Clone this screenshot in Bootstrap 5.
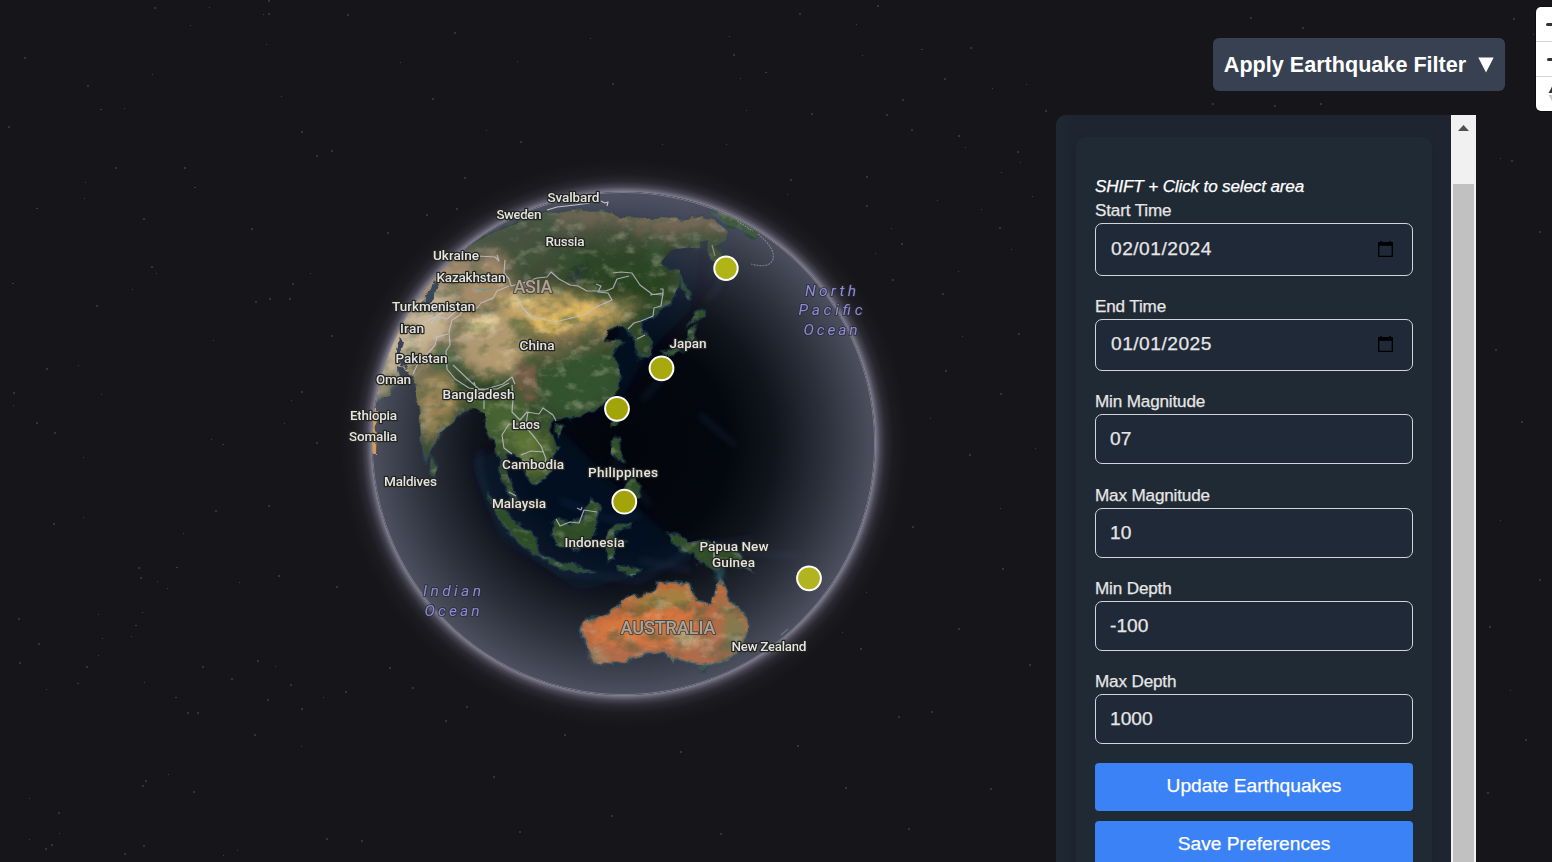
<!DOCTYPE html>
<html lang="en">
<head>
<meta charset="utf-8">
<meta name="viewport" content="width=device-width, initial-scale=1">
<title>Earthquake Globe</title>
<link href="https://cdn.jsdelivr.net/npm/bootstrap@5.3.0/dist/css/bootstrap.min.css" rel="stylesheet">
<style>
  body { background: #16151a; font-family: "Liberation Sans", Arial, sans-serif; color: #e6e6e6; }
  .world { z-index: 0; }
  .overlay { z-index: 1; }
  .side { width: 449px; padding-top: 38px; margin-right: 31px; }
  .filter-btn { width: 292px; height: 53px; background: #384151; color: #fff; font-weight: 700; font-size: 21.6px; border: 0; border-radius: 6px; line-height: 1; white-space: nowrap; gap: 12px; }
  .filter-btn:hover { background: #384151; color: #fff; }
  .filter-btn span { padding-top: 1px; }
  .panel { width: 420px; margin-top: 24px; background: #1e2530; border-radius: 10px 0 0 0; overflow: hidden; }
  .panel-body { padding: 22px 19px 0 20px; background: linear-gradient(90deg, #1e2833, #1e2430 20px, #1e2430); }
  .inner { background: #202a34; border-radius: 10px 10px 0 0; padding: 38px 19px 0; box-shadow: 0 4px 6px rgba(0,0,0,.06); }
  .hint, .inner label { font-size: 17.1px; line-height: 24px; height: 24px; margin: 0; display: block; -webkit-text-stroke: .25px currentColor; letter-spacing: -.15px; }
  .hint { color: #fff; }
  .field { margin-bottom: 19px; position: relative; }
  .inner .form-control { height: 50px; border: 1px solid #d1d5db; border-radius: 7px; background: #202937; color: #e6e6e6; font-size: 19.2px; padding: 0 14px 1px; -webkit-text-stroke: .25px currentColor; }
  .inner .form-control.date { letter-spacing: .48px; padding: 0 15px 2px; }
  .cal { position: absolute; right: 19px; bottom: 18px; }
  .act { height: 48px; background: #3b82f6; color: #fff; border: 0; border-radius: 4px; font-size: 19.2px; margin-bottom: 10px; padding: 0 0 2px; line-height: 1; -webkit-text-stroke: .25px currentColor; }
  .bar { width: 25px; background: #f1f1f1; padding: 0 2px; }
  .bar-arrow { height: 69px; padding-top: 10px; }
  .thumb { background: #c1c1c1; }
  .ctrl { width: 16px; margin-top: 7px; }
  .ctrl-in { width: 34px; height: 104px; background: #fff; border-radius: 5px; box-shadow: 0 0 0 1px rgba(0,0,0,.35); }
  .ctrl-in div + div { border-top: 1px solid #d4d4d4; }
  .lbl text { font-family: Roboto, "Open Sans", sans-serif; font-size: 13.6px; font-weight: 500; fill: #e4e4e4; stroke: #25251f; stroke-width: 2.6px; stroke-linejoin: round; paint-order: stroke; text-anchor: middle; }
  .lbl .continent { font-size: 18px; fill: #aaa397; stroke: #57483c; stroke-width: 2px; }
  .lbl .sea { font-size: 15.5px; font-style: italic; font-weight: 400; fill: #8d8ad6; stroke: #272936; stroke-width: 2px; stroke-opacity: .7; }
</style>
</head>
<body class="vh-100 overflow-hidden position-relative">

<svg class="world position-absolute top-0 start-0" width="1552" height="862" viewBox="0 0 1552 862">
  <defs>
    <clipPath id="disc"><circle cx="623.5" cy="443.5" r="251.5"/></clipPath>
    <radialGradient id="glow" gradientUnits="userSpaceOnUse" cx="623.5" cy="443.5" r="284">
      <stop offset=".884" stop-color="#8b899b"/><stop offset=".893" stop-color="#6a6878"/><stop offset=".905" stop-color="#45434f"/>
      <stop offset=".923" stop-color="#2a2931"/><stop offset=".95" stop-color="#1c1b20"/><stop offset="1" stop-color="#16151a"/>
    </radialGradient>
    <radialGradient id="haze" gradientUnits="userSpaceOnUse" cx="623.5" cy="443.5" r="252">
      <stop offset="0" stop-color="#565a6a" stop-opacity="0"/><stop offset=".42" stop-color="#565a6a" stop-opacity=".02"/>
      <stop offset=".6" stop-color="#565a6a" stop-opacity=".17"/><stop offset=".8" stop-color="#565a6a" stop-opacity=".5"/>
      <stop offset=".93" stop-color="#565a6a" stop-opacity=".75"/><stop offset="1" stop-color="#5b5d6c" stop-opacity=".85"/>
    </radialGradient>
    <radialGradient id="hazeland" gradientUnits="userSpaceOnUse" cx="623.5" cy="443.5" r="252">
      <stop offset=".6" stop-color="#77798a" stop-opacity="0"/><stop offset="1" stop-color="#77798a" stop-opacity=".28"/>
    </radialGradient>
    <filter id="coast" x="-5%" y="-5%" width="110%" height="110%">
      <feTurbulence type="fractalNoise" baseFrequency=".09" numOctaves="3" seed="4" result="n"/>
      <feDisplacementMap in="SourceGraphic" in2="n" scale="9" xChannelSelector="R" yChannelSelector="G"/>
      <feGaussianBlur stdDeviation=".5"/>
    </filter>
    <filter id="soft" x="-50%" y="-50%" width="200%" height="200%"><feGaussianBlur stdDeviation="7"/></filter>
    <filter id="soft4" x="-50%" y="-50%" width="200%" height="200%"><feGaussianBlur stdDeviation="3"/></filter>
    <filter id="grain" x="0" y="0" width="100%" height="100%">
      <feTurbulence type="fractalNoise" baseFrequency=".045 .06" numOctaves="5" seed="11"/>
      <feColorMatrix values="0 0 0 0 .04  0 0 0 0 .09  0 0 0 0 .03  3.2 0 0 0 -1.5"/>
    </filter>
    <filter id="light" x="0" y="0" width="100%" height="100%">
      <feTurbulence type="fractalNoise" baseFrequency=".06 .09" numOctaves="4" seed="29"/>
      <feColorMatrix values="0 0 0 0 .86  0 0 0 0 .78  0 0 0 0 .6  0 3 0 0 -1.6"/>
    </filter>
    <path id="asia" d="M372 408L375 404 390 393 402 381 397 366 409 370 415 383 420 413 421 443 425 462 431 450 440 433 463 413 474 406 485 413 488 437 495 440 499 460 502 483 512 503 521 508 517 496 510 483 505 463 507 452 522 460 527 477 537 485 553 471 554 452 560 448 548 432 552 420 567 418 593 410 612 396 621 378 619 367 611 353 623 342 604 339 607 330 622 325 629 330 637 343 638 357 649 355 650 343 643 331 640 322 657 313 670 303 678 287 680 270 668 270 660 263 670 250 684 248 700 248 700 242 708 240 707 250 711 260 721 264 722 254 714 247 726 240 728 231 717 222 700 218 687 220 663 217 653 220 637 217 620 218 603 210 590 212 573 210 560 213 545 212 520 222 488 235 430 270 375 350 365 410Z"/>
    <path id="oz" d="M580 628L586 621 602 615 620 605 624 599 632 595 640 597 650 594 658 588 659 583 674 582 690 584 691 593 697 601 711 605 716 587 720 578 728 592 731 602 743 612 748 621 748 633 740 648 728 661 706 666 694 664 680 659 673 660 664 653 653 653 638 656 624 661 606 663 592 661 591 652 584 641Z"/>
    <path id="isles" d="M487 493L502 509 520 524 536 537 541 556 534 555 518 543 505 526 492 508ZM539 555L556 561 580 567 594 571 577 571 552 565ZM552 522L558 519 568 523 580 520 586 507 592 500 600 508 596 523 596 533 589 542 576 549 558 546 552 536ZM604 544L608 532 613 526 632 524 630 528 614 531 617 538 626 541 617 545 613 558 608 560ZM612 441L619 438 620 452 626 461 619 462 611 453ZM627 483L634 477 641 486 639 498 630 501 624 493ZM668 533L680 534 686 543 700 540 722 545 739 553 752 571 738 566 724 564 714 570 700 564 696 555 680 550ZM695 313L703 309 703 316 689 324ZM688 330L697 325 695 337 691 343 681 350 668 356 662 353 676 347 687 342ZM680 272L684 283 690 298 687 300 681 287ZM556 424L563 426 560 435 555 431ZM431 457L437 469 434 477 429 470ZM697 667L709 665 703 671ZM708 210L728 211 745 220 760 233 755 238 740 229 724 224ZM616 566L640 569 632 576 618 571ZM612 418L616 412 617 422 613 425Z"/>
    <clipPath id="asiaclip"><use href="#asia"/></clipPath>
  </defs>

  <!-- star field -->
  <g fill="none" stroke="#c7c7d0">
    <path stroke-width="2" stroke-opacity=".17" d="M154 8h2M268 1h2M268 14h2M347 15h2M24 58h2M8 127h2M87 86h2M115 168h2M184 168h2M301 132h2M316 156h2M331 151h2M143 219h2M251 229h2M151 267h2M96 306h2M255 302h2M269 299h2M289 299h2M292 284h2M46 369h2M13 393h2M36 423h2M301 392h2M331 336h2M54 433h2M316 443h2M215 511h2M268 506h2M53 524h2M138 568h2M140 578h2M278 576h2M336 587h2M38 644h2M19 663h2M18 619h2M86 667h2M202 667h2M257 661h2M231 679h2M290 685h2M267 700h2M301 709h2M345 692h2M197 713h2M187 713h2M254 735h2M145 781h2M142 786h2M193 792h2M58 813h2M45 849h2M51 845h2M143 846h2M124 854h2M326 839h2M361 841h2M799 14h2M877 6h2M733 55h2M944 79h2M902 100h2M811 114h2M886 115h2M911 130h2M958 136h2M970 48h2M1045 111h2M790 180h2M866 177h2M866 206h2M901 244h2M999 228h2M892 280h2M817 267h2M1017 152h2M454 33h2M432 99h2M520 142h2M612 84h2M426 215h2M387 233h2M464 178h2M1250 18h2M1302 28h2M1212 104h2M1274 106h2M1320 104h2M1511 161h2M1513 19h2M1539 232h2M1495 350h2M1521 422h2M1539 580h2M1489 627h2M1525 740h2M1487 793h2M834 597h2M860 649h2M759 679h2M721 697h2M912 527h2M945 371h2M969 455h2M1002 569h2M931 712h2M898 717h2M958 629h2M845 788h2M797 746h2M680 752h2M611 816h2M564 735h2M493 777h2M445 721h2M412 688h2M389 668h2M466 707h2M519 832h2M720 834h2M908 829h2M990 789h2M1029 665h2M1018 334h2M1000 394h2M942 294h2M456 209h2"/>
    <path stroke-width="1" stroke-opacity=".23" d="M209 7.500h1M190 25.500h1M263 14.500h1M152 74.500h1M266 44.500h1M100 109.500h2M124 108.500h1M281 96.500h1M85 182.500h1M84 198.500h1M194 187.500h2M36 208.500h2M12 283.500h2M156 273.500h1M132 289.500h1M310 273.500h1M213 340.500h1M78 365.500h1M101 394.500h1M13 405.500h1M291 400.500h1M284 423.500h1M211 439.500h1M222 444.500h2M83 457.500h1M83 517.500h1M183 533.500h1M176 567.500h2M157 581.500h1M167 588.500h1M239 582.500h1M98 614.500h1M142 612.500h1M135 625.500h2M102 638.500h1M131 636.500h1M98 655.500h1M46 689.500h1M77 683.500h2M144 682.500h1M175 697.500h2M275 666.500h1M323 697.500h1M168 774.500h1M301 746.500h1M29 798.500h1M59 833.500h1M29 839.500h1M237 850.500h1M223 855.500h1M729 36.500h1M856 24.500h1M765 72.500h2M740 78.500h1M862 55.500h1M921 49.500h2M992 88.500h1M1026 84.500h1M746 110.500h1M726 144.500h1M965 147.500h1M1001 172.500h1M1020 162.500h1M787 194.500h1M937 200.500h1M891 228.500h1M875 253.500h1M981 209.500h1M1032 196.500h1M1011 249.500h1M958 271.500h1M1500 158.500h1M1533 34.500h1M486 130.500h1M400 62.500h1M662 144.500h1M590 38.500h1M517 61.500h1M866 592.500h1M775 658.500h1M842 632.500h1M1000 508.500h1M930 418.500h1M1035 448.500h1M962 336.500h1M1500 520.500h1M1510 690.500h1"/>
  </g>

  <!-- globe -->
  <circle cx="623.5" cy="443.500" r="284" fill="url(#glow)"/>
  <g clip-path="url(#disc)">
    <circle cx="623.5" cy="443.500" r="252" fill="#02060c"/>
    <g filter="url(#soft)" fill="#0a1834">
      <path d="M640 250L700 250 690 310 650 350 620 400 560 430 650 520 700 560 580 590 500 540 470 460 560 430 600 400 620 330Z" opacity=".5"/>
      <path d="M540 195L680 190 730 260 700 290 730 240Z" opacity=".8"/>
    </g>
    <path filter="url(#soft4)" fill="none" stroke="#21345f" stroke-width="3" opacity=".5" d="M480 450Q475 480 505 530L560 572 640 580 700 545 752 540M560 500L610 520 640 515M640 560L690 570M612 460L650 505M700 415L735 445M730 552L800 556M705 300Q722 290 722 270M642 400L665 375"/>
    <circle cx="623.5" cy="443.500" r="252" fill="url(#haze)"/>

    <g filter="url(#coast)">
      <g stroke="#294a5c" stroke-width="3" stroke-opacity=".4">
        <use href="#asia" fill="#2e4426"/><use href="#isles" fill="#2f4d25"/>
      </g>
      <g clip-path="url(#asiaclip)">
        <g filter="url(#soft)">
          <path fill="#38462c" d="M470 210H740V270L640 290 520 280 450 260Z"/>
          <path fill="#76654a" d="M555 208H735V228L650 234 620 221 560 226Z"/>
          <path fill="#27401c" d="M560 245L680 245 670 300 620 290 560 275Z"/>
          <path fill="#ad8f64" d="M370 400L380 320 440 258 500 255 515 290 480 320 445 350 410 380Z"/>
          <path fill="#e0c99c" d="M365 410L385 340 420 300 450 290 445 330 400 370Z"/>
          <path fill="#c7a662" d="M500 295L560 292 612 303 640 305 618 322 565 340 500 320Z"/>
          <path fill="#b39a6e" d="M447 330L500 310 530 340 528 372 500 380 465 370Z"/>
          <path fill="#72674a" d="M530 340L560 332 600 325 620 340 575 350 540 365Z"/>
          <path fill="#31532f" d="M535 370L570 350 615 352 622 392 570 418 540 405Z"/>
          <path fill="#a08650" d="M412 382L440 368 468 386 455 412 430 445 418 420Z"/>
          <path fill="#476332" d="M450 385L520 385 535 430 490 450 475 405Z"/>
          <path fill="#5e7639" d="M505 430L545 432 550 475 520 475Z"/>
        </g>
        <g filter="url(#soft4)">
          <path fill="#efd698" d="M462 323Q480 312 500 316L497 326 472 334Z"/>
          <path fill="#e3bc62" d="M528 318L560 312 590 302 600 310 570 322 555 334 538 328Z"/>
          <path fill="#e6cb85" d="M500 298L530 296 535 306 515 308Z"/>
          <path fill="#263c24" d="M452 370L480 385 512 382 510 396 470 398 455 385Z"/>
          <path fill="#745d46" d="M515 358L535 365 540 400 525 402 518 380Z"/>
          <path fill="#4a7041" d="M440 345L450 352 452 368 430 366Z"/>
          <path fill="#12233c" d="M566 282L573 276 584 263 586 266 577 279Z"/>
        </g>
      </g>
      <g stroke="#225c70" stroke-width="3" stroke-opacity=".45"><use href="#oz" fill="#bd683a"/></g>
      <g filter="url(#soft4)">
        <path fill="#dd7438" d="M590 625L640 608 700 612 700 640 650 646 596 645Z"/>
        <path fill="#a6803f" d="M625 602L656 595 672 588 688 590 693 606 650 609Z"/>
        <path fill="#857a42" d="M716 592L728 608 744 620 742 640 730 655 722 640 726 622Z"/>
        <path fill="#b26b3d" d="M690 640L730 640 722 658 700 660Z"/>
        <path fill="#f0c48c" d="M673 635L690 630 700 644 682 647Z"/>
        <path fill="#b39066" d="M590 650L608 655 606 661 593 660Z"/>
        <path fill="#317c8c" d="M716 568L724 570 720 582Z"/>
      </g>
      <path fill="#d59a54" d="M368 410H377L376 455H368Z"/>
      <path fill="#22344a" d="M424 296L434 283 439 285 432 303 423 306Z"/>
      <path fill="#263245" d="M400 336L404 340 400 356 408 368 400 366 396 350Z"/>
    </g>
    <clipPath id="landclip"><use href="#asia"/><use href="#oz"/><use href="#isles"/></clipPath>
    <g clip-path="url(#landclip)">
      <rect x="370" y="190" width="510" height="510" filter="url(#grain)" opacity=".5"/>
      <rect x="370" y="190" width="510" height="510" filter="url(#light)" opacity=".3"/>
      <circle cx="623.5" cy="443.500" r="252" fill="url(#hazeland)"/>
    </g>

    <!-- borders -->
    <g fill="none" stroke="#c5c2ce" stroke-width="1.2" stroke-linejoin="round" opacity=".8">
      <path d="M477 256l18 1 4 4-2-6M505 260l-1 13 5 6 2 7 12-3 14-5 10-1 4-5 8 7 11 6 8 1 9 5 19 0 7-3 4-9 12-3M516 298l6 9 8 9 13 3 12 3 16-4 13-3 12-8 16-7-4-7-10-1 3-6-5-2M613 273l8-1 11 1 8 12 12 9 11 1 0-6-3 0M650 295l13-2-2 13-7 2-1 8-12 5-7 2-6 6M637 339l8-4M509 286l-12 5-4 7-12 5-4 5-14 2-3 5-8 5-3 12 1 13-4 6 1 18 8 10 14 9 14 2 20-6 9-7 3 7M453 365l18 17 8 7 18 0 12-6M474 382l3 9 7 8 0 10M512 385l1 14-1 13 8 8 7-8 12 2 4-6 10 7 3 6M528 412l-2 12-17 0-7 11 2 13 8 6M525 426l10 12 6 8 5 13-2 6-14 1M521 455l10-4 13 1M448 334l-11 3-2 8-7 8-8 6-7 15M455 312l-8 7-10-3-12 6-9 12M445 312l-8 3-6 9"/>
      <path d="M556 519l4 7 10-4 9 1 5-13 13 2M577 508l4 2 1-3M509 492l7 4M714 541v25"/>
      <path d="M547 210l10-3 18-2 15-2M601 201l4 2 3-1-1 4" stroke="#dedfe5"/>
      <path d="M737 221l16 10M758 234q18 15 15 25t-22 5" stroke-dasharray="2 1" opacity=".55"/>
      <path d="M712 245l3 11" stroke="#d6d4bd" opacity=".6"/>
    </g>
    <path fill="none" stroke="#5f9a97" stroke-width="1.500" opacity=".6" d="M475 288l9 2 8-2M781 635l7-6M630 575l6-1"/>
    <circle cx="623.5" cy="443.500" r="251.200" fill="none" stroke="#8f8da1" stroke-width="1.200" opacity=".65"/>
  </g>

  <!-- place names -->
  <g class="lbl" transform="translate(0 -.8)">
    <text class="continent" x="533" y="294.300" textLength="39">ASIA</text>
    <text class="continent" x="668" y="634.800" textLength="95">AUSTRALIA</text>
    <text x="573.500" y="202.500" textLength="52">Svalbard</text>
    <text x="519" y="219.500" textLength="45">Sweden</text>
    <text x="565" y="246.500" textLength="39">Russia</text>
    <text x="456" y="261" textLength="46">Ukraine</text>
    <text x="471" y="282.500" textLength="69">Kazakhstan</text>
    <text x="433.500" y="312" textLength="83">Turkmenistan</text>
    <text x="412" y="334" textLength="24">Iran</text>
    <text x="537" y="351" textLength="35">China</text>
    <text x="421.500" y="364" textLength="52">Pakistan</text>
    <text x="393.500" y="385" textLength="35">Oman</text>
    <text x="478.500" y="399.500" textLength="72">Bangladesh</text>
    <text x="373.500" y="420.500" textLength="47">Ethiopia</text>
    <text x="526" y="429.500" textLength="28">Laos</text>
    <text x="373" y="442" textLength="48">Somalia</text>
    <text x="533" y="469.500" textLength="62">Cambodia</text>
    <text x="623" y="477.500" textLength="70">Philippines</text>
    <text x="410.500" y="487" textLength="53">Maldives</text>
    <text x="519" y="508.500" textLength="54">Malaysia</text>
    <text x="594.500" y="548" textLength="60">Indonesia</text>
    <text x="688" y="348.500" textLength="37">Japan</text>
    <text x="734" y="552" textLength="69">Papua New</text>
    <text x="733.500" y="567.500" textLength="43">Guinea</text>
    <text x="769" y="651.500" textLength="75">New Zealand</text>
    <text class="sea" x="830.500" y="296.500" textLength="51">North</text>
    <text class="sea" x="830.500" y="316" textLength="64">Pacific</text>
    <text class="sea" x="830.500" y="335.500" textLength="54">Ocean</text>
    <text class="sea" x="452" y="596.500" textLength="58">Indian</text>
    <text class="sea" x="452" y="616.500" textLength="55">Ocean</text>
  </g>

  <!-- earthquakes -->
  <g fill="#a8a90e" stroke="#fff" stroke-width="2">
    <circle cx="726" cy="268.300" r="11.700" fill="#b0b417"/><circle cx="661.500" cy="368.300" r="11.900"/><circle cx="617" cy="408.800" r="11.900" fill="#a2a409"/><circle cx="624.300" cy="501.700" r="11.900" fill="#a2a409"/><circle cx="809" cy="578.300" r="11.900" fill="#b2b320"/>
  </g>
</svg>

<main class="overlay position-relative d-flex justify-content-end h-100">
  <section class="side d-flex flex-column h-100">
    <button class="btn filter-btn align-self-end flex-shrink-0 d-flex align-items-center justify-content-center p-0" type="button"><span>Apply Earthquake Filter</span>
      <svg width="16" height="16" viewBox="0 0 16 16"><path fill="#fff" d="M.3.500h15.400L8 15.500z"/></svg>
    </button>
    <div class="panel d-flex flex-grow-1">
      <div class="panel-body flex-grow-1">
        <form class="inner h-100">
          <p class="hint fst-italic">SHIFT + Click to select area</p>
          <div class="field"><label for="st">Start Time</label><input id="st" class="form-control date" style="height:53px" value="02/01/2024">
            <svg class="cal" width="17" height="18" viewBox="0 0 17 18"><path d="M4 1v2M13 1v2" stroke="#000" stroke-width="1.600"/><path d="M1.700 3h13.600v13.300H1.700z" fill="none" stroke="#000" stroke-width="1.300" stroke-linejoin="round"/><path d="M1 2.300h15v3.500H1z"/></svg></div>
          <div class="field"><label for="en">End Time</label><input id="en" class="form-control date" style="height:52px" value="01/01/2025">
            <svg class="cal" width="17" height="18" viewBox="0 0 17 18"><path d="M4 1v2M13 1v2" stroke="#000" stroke-width="1.600"/><path d="M1.700 3h13.600v13.300H1.700z" fill="none" stroke="#000" stroke-width="1.300" stroke-linejoin="round"/><path d="M1 2.300h15v3.500H1z"/></svg></div>
          <div class="field" style="margin-bottom:20px"><label for="mi">Min Magnitude</label><input id="mi" class="form-control" value="07"></div>
          <div class="field"><label for="ma">Max Magnitude</label><input id="ma" class="form-control" value="10"></div>
          <div class="field"><label for="di">Min Depth</label><input id="di" class="form-control" value="-100"></div>
          <div class="field"><label for="da">Max Depth</label><input id="da" class="form-control" value="1000"></div>
          <button class="btn act w-100 d-block" type="button">Update Earthquakes</button>
          <button class="btn act w-100 d-block" type="button">Save Preferences</button>
        </form>
      </div>
      <div class="bar d-flex flex-column flex-shrink-0">
        <div class="bar-arrow text-center lh-1"><svg class="d-block mx-auto" width="11" height="6"><path fill="#505050" d="M0 6L5.500 0 11 6z"/></svg></div>
        <div class="thumb flex-grow-1"></div>
      </div>
    </div>
  </section>
  <aside class="ctrl">
    <div class="ctrl-in d-flex flex-column">
      <div class="flex-fill"><svg class="d-block" width="34" height="34"><path d="M11.500 17.500h12M17.500 11.500v12" stroke="#333" stroke-width="3" stroke-linecap="round"/></svg></div>
      <div class="flex-fill"><svg class="d-block" width="34" height="34"><path d="M12.500 17.500h10" stroke="#333" stroke-width="3" stroke-linecap="round"/></svg></div>
      <div class="flex-fill"><svg class="d-block" width="34" height="34"><path d="M12.500 16l5-9 5 9z" fill="#333"/><path d="M12.500 18l5 9 5-9z" fill="#ccc"/></svg></div>
    </div>
  </aside>
</main>
<script src="https://cdn.jsdelivr.net/npm/bootstrap@5.3.0/dist/js/bootstrap.bundle.min.js"></script>
</body>
</html>
